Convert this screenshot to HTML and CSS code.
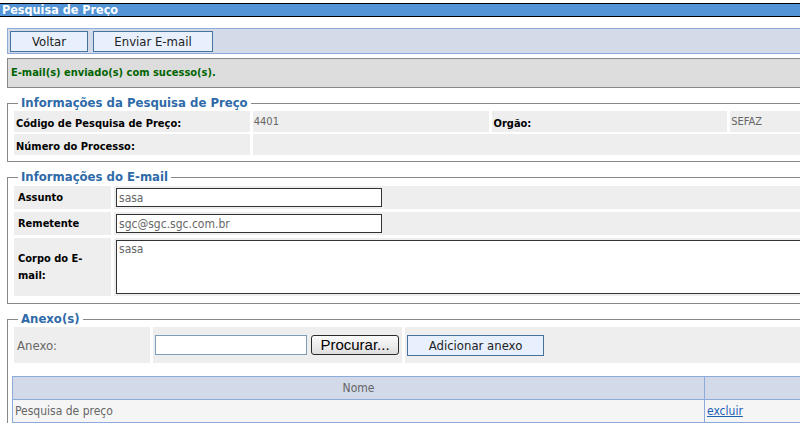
FILE: index.html
```html
<!DOCTYPE html>
<html lang="pt-BR">
<head>
<meta charset="utf-8">
<title>Pesquisa de Preço</title>
<link rel="stylesheet" href="styles.css">
</head>
<body>
<div class="page">
  <div class="titlebar">Pesquisa de Preço</div>
  <div class="content">
    <div class="toolbar">
      <button class="btn btn-voltar" type="button">Voltar</button>
      <button class="btn btn-enviar" type="button">Enviar E-mail</button>
    </div>
    <div class="msg">E-mail(s) enviado(s) com sucesso(s).</div>

    <fieldset class="group group-info">
      <legend>Informações da Pesquisa de Preço</legend>
      <div class="grid4">
        <div class="lbl">Código de Pesquisa de Preço:</div>
        <div class="val">4401</div>
        <div class="lbl">Orgão:</div>
        <div class="val">SEFAZ</div>
        <div class="lbl">Número do Processo:</div>
        <div class="val span3"></div>
      </div>
    </fieldset>

    <fieldset class="group group-mail">
      <legend>Informações do E-mail</legend>
      <div class="grid2">
        <div class="lbl2">Assunto</div>
        <div class="field"><input class="txt" type="text" value="sasa"></div>
        <div class="lbl2">Remetente</div>
        <div class="field"><input class="txt" type="text" value="sgc@sgc.sgc.com.br"></div>
        <div class="lbl2">Corpo do E-mail:</div>
        <div class="field"><textarea class="area">sasa</textarea></div>
      </div>
    </fieldset>

    <fieldset class="group group-anexo">
      <legend>Anexo(s)</legend>
      <div class="grid3">
        <div class="lbl3">Anexo:</div>
        <div class="file-cell"><span class="file-box"></span><span class="file-btn">Procurar...</span></div>
        <div class="add-cell"><button class="btn btn-add" type="button">Adicionar anexo</button></div>
      </div>
      <table class="list">
        <thead>
          <tr><th class="col-nome">Nome</th><th class="col-acao"></th></tr>
        </thead>
        <tbody>
          <tr><td>Pesquisa de preço</td><td><a class="link" href="#">excluir</a></td></tr>
        </tbody>
      </table>
    </fieldset>
  </div>
</div>
</body>
</html>
```
FILE: styles.css
```css
html {
  overflow: hidden;
}

body {
  margin: 0;
  background: #ffffff;
  font-family: "DejaVu Sans Condensed", "DejaVu Sans", sans-serif;
  font-stretch: condensed;
  font-size: 11px;
  color: #000000;
}

.page {
  width: 980px;
  padding-top: 3px;
}

.titlebar {
  background: #5294d5;
  border-top: 1px solid #000000;
  border-bottom: 1px solid #000000;
  height: 12px;
  line-height: 12px;
  color: #ffffff;
  font-weight: bold;
  font-size: 12.5px;
  padding-left: 2px;
  overflow: hidden;
}

.content {
  padding: 11px 7px 0;
}

.toolbar {
  display: flex;
  gap: 5px;
  border: 1px solid #8eaadb;
  background: #d3dae8;
  padding: 2px 2px 1px;
}

.btn {
  font-family: inherit;
  font-stretch: condensed;
  font-size: 13px;
  color: #222222;
  background: #e8f0fd;
  border: 1px solid #45729f;
  height: 21px;
  padding: 0;
  margin: 0;
}

.btn-voltar {
  width: 78px;
}

.btn-enviar {
  width: 120px;
}

.msg {
  margin-top: 4px;
  border: 1px solid #888888;
  background: #dddddd;
  height: 28px;
  line-height: 28px;
  padding-left: 3px;
  color: #006400;
  font-weight: bold;
}

.group {
  margin: 8px 0 0;
  border: 1px solid #888888;
  padding: 1px 6px 6px;
  min-width: 0;
}

.group legend {
  margin-left: 4px;
  padding: 0 3px;
  color: #2f6aa8;
  font-weight: bold;
  font-size: 13px;
  line-height: 14px;
}

.grid4 {
  display: grid;
  grid-template-columns: repeat(4, 1fr);
  grid-auto-rows: 21px;
  gap: 2px 3px;
}

.lbl {
  background: #eeeeee;
  font-weight: bold;
  padding: 6px 0 0 2px;
}

.val {
  background: #eeeeee;
  color: #666666;
  padding: 4px 0 0 1px;
}

.span3 {
  grid-column: span 3;
}

.group-mail {
  padding-bottom: 7px;
}

.grid2 {
  display: grid;
  grid-template-columns: 97px 1fr;
  grid-template-rows: 23px 23px 58px;
  gap: 3px;
  margin-top: 1px;
}

.lbl2 {
  background: #eeeeee;
  font-weight: bold;
  display: flex;
  align-items: center;
  padding-left: 4px;
  padding-right: 2px;
  line-height: 17px;
}

.field {
  background: #eeeeee;
  padding: 2px 0 0 2px;
}

.txt {
  box-sizing: border-box;
  width: 266px;
  height: 19px;
  margin: 0;
  border: 1px solid #333333;
  padding: 0 2px;
  font-family: inherit;
  font-stretch: condensed;
  font-size: 12px;
  color: #666666;
  background: #ffffff;
}

.area {
  box-sizing: border-box;
  display: block;
  width: calc(100% - 4px);
  height: 54px;
  margin: 0;
  border: 1px solid #333333;
  padding: 1px 2px;
  font-family: inherit;
  font-stretch: condensed;
  font-size: 12px;
  color: #666666;
  resize: none;
  background: #ffffff;
}

.group-anexo {
  padding-bottom: 20px;
}

.grid3 {
  display: grid;
  grid-template-columns: 136px 249px 1fr;
  grid-auto-rows: 36px;
  gap: 3px;
  margin-top: 0;
}

.lbl3 {
  background: #eeeeee;
  color: #666666;
  font-size: 13px;
  display: flex;
  align-items: center;
  padding-left: 3px;
}

.file-cell {
  background: #eeeeee;
  display: flex;
  align-items: center;
  gap: 4px;
  padding-left: 2px;
}

.file-box {
  box-sizing: border-box;
  width: 152px;
  height: 20px;
  border: 1px solid #7f9db9;
  background: #ffffff;
}

.file-btn {
  box-sizing: border-box;
  width: 88px;
  height: 20px;
  border: 1px solid #2a2a2a;
  border-radius: 3px;
  background: linear-gradient(#fbfbfb, #dedede);
  font-family: "Liberation Sans", Arial, sans-serif;
  font-stretch: normal;
  font-size: 15px;
  line-height: 18px;
  text-align: center;
  color: #000000;
}

.add-cell {
  background: #eeeeee;
  display: flex;
  align-items: center;
  padding-left: 2px;
}

.btn-add {
  width: 137px;
  height: 21px;
}

.list {
  margin: 13px 0 0 -2px;
  width: calc(100% + 4px);
  border-collapse: collapse;
  border: 1px solid #8daadc;
}

.list th,
.list td {
  border: 1px solid #8daadc;
  height: 22px;
  padding: 0 2px;
  color: #666666;
  font-size: 12px;
  font-weight: normal;
}

.list th {
  background: #d2d9e8;
  text-align: center;
}

.list td {
  background: #f5f5f5;
  text-align: left;
}

.col-nome {
  width: 687px;
}

.link {
  color: #1b5fb5;
  text-decoration: underline;
}
```
